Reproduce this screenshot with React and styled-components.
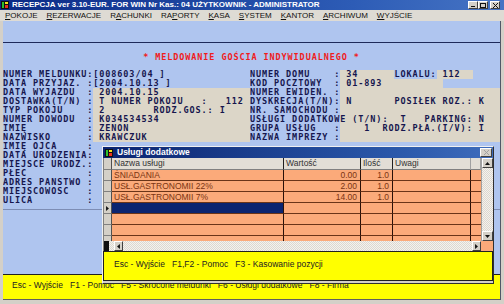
import React from "react";
import styled, { createGlobalStyle } from "styled-components";

const BLUE = "#afc5ef";
const BEIGE = "#dcd6c8";
const NAVY = "#16164e";
const ORANGE = "#fbaa7a";

const GlobalStyle = createGlobalStyle`
  html, body { margin: 0; padding: 0; }
  body { width: 504px; height: 304px; overflow: hidden; background: #d4d0c8; }
  * { box-sizing: border-box; }
`;

const Window = styled.div`
  position: relative;
  width: 504px;
  height: 304px;
  display: flex;
  flex-direction: column;
  background: #d4d0c8;
  font-family: "Liberation Sans", Arial, sans-serif;
`;

const TitleBar = styled.div`
  height: 10px;
  flex: none;
  display: flex;
  align-items: center;
  padding: 0 4px 0 1px;
  background: linear-gradient(90deg, #0b2a86, #2d5cb6 70%, #4674c4);
  color: #fff;
`;

const TitleText = styled.span`
  flex: 1;
  margin-left: 3px;
  font-size: 8px;
  font-weight: bold;
  line-height: 10px;
  white-space: nowrap;
`;

const Controls = styled.div`
  display: flex;
`;

const CtlButton = styled.div`
  width: 10px;
  height: 8px;
  margin-left: ${(p) => (p.$gap ? 2 : 0)}px;
  background: #d4d0c8;
  border: 1px solid;
  border-color: #fff #404040 #404040 #fff;
  display: flex;
  align-items: center;
  justify-content: center;
`;

const MenuBar = styled.div`
  height: 11px;
  flex: none;
  display: flex;
  align-items: center;
  gap: 9px;
  padding-left: 5px;
  background: #dedbd4;
  font-size: 8px;
  color: #111;
`;

const MenuItem = styled.span`
  line-height: 11px;
  white-space: nowrap;
  u { text-decoration: underline; }
`;

const Body = styled.div`
  flex: 1;
  display: flex;
  flex-direction: column;
  padding: 0 3px 4px 3px;
`;

const Client = styled.div`
  flex: 1;
  display: flex;
  flex-direction: column;
  background: ${BLUE};
  border-right: 1px solid #505868;
`;

const TopStrip = styled.div`
  height: 22px;
  flex: none;
  border-bottom: 1px solid #1e2a5a;
`;

/* DOS screen text: 6px character cells */
const Mono = styled.div`
  font-family: "DejaVu Sans Mono", monospace;
  font-weight: bold;
  font-size: 8.5px;
  letter-spacing: 0.9px;
  white-space: pre;
`;

const Heading = styled(Mono)`
  height: 27px;
  flex: none;
  display: flex;
  align-items: center;
  justify-content: center;
  color: #f01c1c;
`;

const FormGrid = styled(Mono)`
  display: grid;
  grid-template-columns: 247px 1fr;
  grid-auto-rows: 9px;
  line-height: 9px;
  color: ${NAVY};
  padding-bottom: 4px;
  border-bottom: 1px solid #7d8db4;
`;

const Line = styled.div`
  display: flex;
  overflow: hidden;
`;

const Seg = styled.span`
  flex: ${(p) => (p.$grow ? 1 : "none")};
  background: ${(p) => (p.$fill ? BEIGE : "transparent")};
`;

const Spacer = styled.div`
  flex: 1;
`;

const StatusBar = styled.div`
  height: 26px;
  flex: none;
  background: #ffff00;
  border-top: 1px solid #202020;
  border-bottom: 1px solid #606060;
  padding-left: 9px;
  font-size: 8.5px;
  line-height: 21px;
  color: #222;
  white-space: pre;
`;

/* dialog */

const Dialog = styled.div`
  position: absolute;
  left: 102px;
  top: 146px;
  width: 392px;
  height: 138px;
  display: flex;
  flex-direction: column;
  background: #d4d0c8;
  border: 1px solid;
  border-color: #f0f0f0 #303030 #303030 #f0f0f0;
  padding: 0 0 2px 0;
`;

const DlgTitle = styled.div`
  height: 11px;
  flex: none;
  display: flex;
  align-items: center;
  padding: 0 1px 0 2px;
  background: linear-gradient(90deg, #0a2470, #2a58aa 75%, #3e6cbc);
  color: #fff;
`;

const DlgTitleText = styled.span`
  flex: 1;
  margin-left: 4px;
  font-size: 8.5px;
  font-weight: bold;
  line-height: 11px;
`;

const DlgClose = styled.div`
  width: 12px;
  height: 9px;
  background: #d4d0c8;
  border: 1px solid;
  border-color: #fff #404040 #404040 #fff;
  display: flex;
  align-items: center;
  justify-content: center;
`;

const GridArea = styled.div`
  height: 93px;
  flex: none;
  display: grid;
  grid-template-columns: 1fr 12px;
  grid-template-rows: 1fr 10px;
  border-left: 1px solid #808080;
  overflow: hidden;
`;

const Table = styled.div`
  overflow: hidden;
  background: ${ORANGE};
  font-size: 8.5px;
`;

const COLS = "8px 172px 77px 32px 78px 1fr";

const Row = styled.div`
  display: grid;
  grid-template-columns: ${COLS};
  height: ${(p) => (p.$head ? 12 : 11)}px;
  line-height: ${(p) => (p.$head ? 11 : 10)}px;
`;

const Ind = styled.div`
  background: #d4d0c8;
  border-right: 1px solid #505050;
  border-bottom: 1px solid #808080;
  display: flex;
  align-items: center;
  justify-content: center;
`;

const HeadCell = styled.div`
  background: #e2ded6;
  border-right: 1px solid ${(p) => (p.$dark ? "#202020" : "#a0a0a0")};
  border-bottom: 1px solid #808080;
  padding-left: 2px;
  color: #333;
  white-space: nowrap;
`;

const Cell = styled.div`
  background: ${(p) => (p.$sel ? "#0b2470" : ORANGE)};
  border-right: 1px solid #281008;
  border-bottom: 1px solid #6a3418;
  padding: 0 ${(p) => (p.$right ? 3 : 2)}px;
  text-align: ${(p) => (p.$right ? "right" : "left")};
  color: #7a3412;
  white-space: nowrap;
  overflow: hidden;
`;

const Filler = styled.div`
  background: ${ORANGE};
  border-bottom: 1px solid #6a3418;
`;

const VScroll = styled.div`
  display: flex;
  flex-direction: column;
  justify-content: space-between;
  background: repeating-conic-gradient(#f4f2ee 0 25%, #dcd8d0 0 50%) 0 0 / 2px 2px;
  border-left: 1px solid #a0a0a0;
`;

const HScroll = styled.div`
  display: flex;
  justify-content: space-between;
  align-items: stretch;
  background: repeating-conic-gradient(#f4f2ee 0 25%, #dcd8d0 0 50%) 0 0 / 2px 2px;
  padding-left: 5px;
  border-left: 5px solid #101010;
`;

const ArrowBtn = styled.div`
  width: ${(p) => (p.$h ? 9 : 11)}px;
  height: 10px;
  background: #d4d0c8;
  border: 1px solid;
  border-color: #fff #404040 #404040 #fff;
  display: flex;
  align-items: center;
  justify-content: center;
`;

const Corner = styled.div`
  background: ${ORANGE};
`;

const HelpPanel = styled.div`
  height: 30px;
  flex: none;
  background: #ffff00;
  border: 1px solid #202020;
  padding: 6px 0 0 10px;
  font-size: 8.5px;
  line-height: 12px;
  color: #222;
  white-space: pre;
`;

const AppIcon = () => (
  <svg width="8" height="8" viewBox="0 0 8 8">
    <rect x="0" y="0" width="8" height="8" fill="#101010" />
    <rect x="1" y="1" width="2" height="6" fill="#2ec02e" />
    <rect x="4" y="1" width="3" height="2" fill="#f4e020" />
    <rect x="4" y="4" width="3" height="3" fill="#e83020" />
  </svg>
);

const Tri = ({ dir }) => {
  const pts = {
    up: "0,4 3.5,0 7,4",
    down: "0,0 3.5,4 7,0",
    left: "4,0 0,3.5 4,7",
    right: "0,0 4,3.5 0,7",
  }[dir];
  const vertical = dir === "up" || dir === "down";
  return (
    <svg width={vertical ? 5 : 3} height={vertical ? 3 : 5} viewBox={vertical ? "0 0 7 4" : "0 0 4 7"}>
      <polygon points={pts} fill="#111" />
    </svg>
  );
};

const LEFT = [
  ["NUMER MELDUNKU:[008603/04 ]"],
  ["DATA PRZYJAZ. :[2004.10.13 ]"],
  ["DATA WYJAZDU  : 2004.10.15", [[15, 41]]],
  ["DOSTAWKA(T/N) : T NUMER POKOJU   :   112", [[15, 41]]],
  ["TYP POKOJU    : 2        RODZ.GOŚ.: I", [[15, 41]]],
  ["NUMER DOWODU  : K034534534", [[15, 41]]],
  ["IMIĘ          : ZENON", [[15, 41]]],
  ["NAZWISKO      : KRAWCZUK", [[15, 41]]],
  ["IMIĘ OJCA     :"],
  ["DATA URODZENIA:"],
  ["MIEJSCE URODZ.:"],
  ["PŁEĆ          :"],
  ["ADRES PAŃSTWO :"],
  ["MIEJSCOWOŚĆ   :"],
  ["ULICA         :"],
];

const RIGHT = [
  ["NUMER DOMU    : 34      LOKALU: 112", [[15, 24], [31, 37]]],
  ["KOD POCZTOWY  : 01-893", [[15, 32]]],
  ["NUMER EWIDEN. :", [[15, 41]]],
  ["DYSKRECJA(T/N): N       POSIŁEK ROZ.: K", [[15, 41]]],
  ["NR. SAMOCHODU :", [[15, 41]]],
  ["USŁUGI DODATKOWE (T/N):  T   PARKING: N", [[15, 41]]],
  ["GRUPA USŁUG   :    1  RODZ.PŁA.(I/V): I", [[15, 41]]],
  ["NAZWA IMPREZY :", [[15, 41]]],
];

function FormLine({ row }) {
  if (!row) return <Line />;
  const [text, marks = []] = row;
  const s = text.padEnd(41, " ");
  const parts = [];
  let pos = 0;
  marks.forEach(([a, b]) => {
    if (a > pos) parts.push([s.slice(pos, a), false]);
    parts.push([s.slice(a, b), true]);
    pos = b;
  });
  if (pos < s.length) parts.push([s.slice(pos), false]);
  return (
    <Line>
      {parts.map(([t, f], i) => (
        <Seg key={i} $fill={f} $grow={f && i === parts.length - 1}>
          {t}
        </Seg>
      ))}
    </Line>
  );
}

const SERVICES = [
  { name: "ŚNIADANIA", value: "0.00", qty: "1.0" },
  { name: "USŁ.GASTRONOMII 22%", value: "2.00", qty: "1.0" },
  { name: "USŁ.GASTRONOMII 7%", value: "14.00", qty: "1.0" },
  { sel: true },
  {},
  {},
  {},
];

const MENU = [
  ["", "P", "OKOJE"],
  ["", "R", "EZERWACJE"],
  ["R", "A", "CHUNKI"],
  ["RA", "P", "ORTY"],
  ["", "K", "ASA"],
  ["", "S", "YSTEM"],
  ["", "K", "ANTOR"],
  ["", "A", "RCHIWUM"],
  ["", "W", "YJŚCIE"],
];

export default function App() {
  return (
    <Window>
      <GlobalStyle />
      <TitleBar>
        <AppIcon />
        <TitleText>RECEPCJA ver 3.10-EUR. FOR WIN Nr Kas.: 04  UŻYTKOWNIK - ADMINISTRATOR</TitleText>
        <Controls>
          <CtlButton>
            <svg width="5" height="4" viewBox="0 0 5 4"><rect x="0" y="3" width="4" height="1" fill="#111" /></svg>
          </CtlButton>
          <CtlButton>
            <svg width="6" height="5" viewBox="0 0 6 5"><rect x="0.5" y="0.5" width="5" height="4" fill="none" stroke="#111" /></svg>
          </CtlButton>
          <CtlButton $gap>
            <svg width="5" height="5" viewBox="0 0 5 5"><path d="M0 0L5 5M5 0L0 5" stroke="#111" strokeWidth="1" /></svg>
          </CtlButton>
        </Controls>
      </TitleBar>
      <MenuBar>
        {MENU.map(([a, u, b]) => (
          <MenuItem key={a + u + b}>
            {a}
            <u>{u}</u>
            {b}
          </MenuItem>
        ))}
      </MenuBar>
      <Body>
        <Client>
          <TopStrip />
          <Heading>* MELDOWANIE GOŚCIA INDYWIDUALNEGO *</Heading>
          <FormGrid>
            {LEFT.map((row, i) => (
              <React.Fragment key={i}>
                <FormLine row={row} />
                <FormLine row={RIGHT[i]} />
              </React.Fragment>
            ))}
          </FormGrid>
          <Spacer />
          <StatusBar>
            {"Esc - Wyjście   F1 - Pomoc   F5 - Skrócone meldunki   F6 - Usługi dodatkowe   F8 - Firma"}
          </StatusBar>
        </Client>
      </Body>

      <Dialog>
        <DlgTitle>
          <AppIcon />
          <DlgTitleText>Usługi dodatkowe</DlgTitleText>
          <DlgClose>
            <svg width="5" height="5" viewBox="0 0 5 5"><path d="M0 0L5 5M5 0L0 5" stroke="#a0a0a0" strokeWidth="1" /></svg>
          </DlgClose>
        </DlgTitle>
        <GridArea>
          <Table>
            <Row $head>
              <Ind />
              <HeadCell $dark>Nazwa usługi</HeadCell>
              <HeadCell $dark>Wartość</HeadCell>
              <HeadCell $dark>Ilość</HeadCell>
              <HeadCell>Uwagi</HeadCell>
              <HeadCell />
            </Row>
            {SERVICES.map((s, i) => (
              <Row key={i}>
                <Ind>{s.sel && <Tri dir="right" />}</Ind>
                <Cell $sel={s.sel}>{s.name}</Cell>
                <Cell $right>{s.value}</Cell>
                <Cell $right>{s.qty}</Cell>
                <Cell />
                <Filler />
              </Row>
            ))}
          </Table>
          <VScroll>
            <ArrowBtn><Tri dir="up" /></ArrowBtn>
            <ArrowBtn><Tri dir="down" /></ArrowBtn>
          </VScroll>
          <HScroll>
            <ArrowBtn $h><Tri dir="left" /></ArrowBtn>
            <ArrowBtn $h><Tri dir="right" /></ArrowBtn>
          </HScroll>
          <Corner />
        </GridArea>
        <HelpPanel>{"Esc - Wyjście   F1,F2 - Pomoc   F3 - Kasowanie pozycji"}</HelpPanel>
      </Dialog>
    </Window>
  );
}
